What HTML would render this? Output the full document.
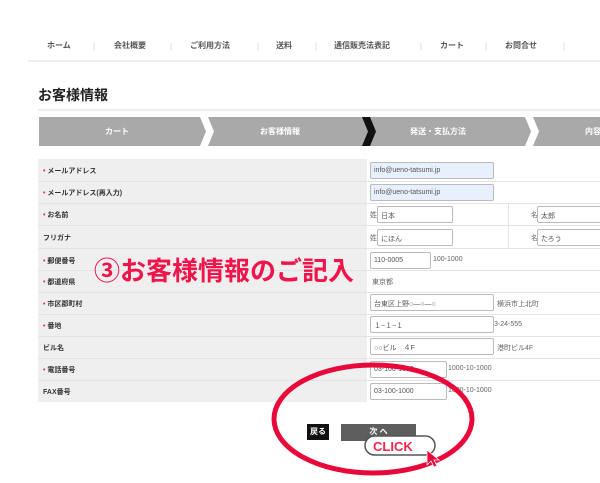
<!DOCTYPE html>
<html><head><meta charset="utf-8"><style>
*{margin:0;padding:0;box-sizing:border-box}
body{width:600px;height:483px;background:#fff;position:relative;overflow:hidden;font-family:"Liberation Sans","Noto Sans CJK JP",sans-serif;color:#333}
.a{position:absolute;white-space:nowrap}
.nav{font-size:8px;font-weight:bold;color:#555;top:40px}
.lbl{font-size:7px;font-weight:bold;color:#333;left:43px}
.lbl b{color:#e8334a}
.in{position:absolute;height:17px;border:1px solid #bbb;background:#fff;font-size:7px;color:#555;padding:4px 3px;border-radius:2px}
.t{font-size:7px;color:#666}
.row{position:absolute;left:38px;width:562px;height:1px;background:#e4e4e4}
</style></head><body>
<div class="a nav" style="left:47px">ホーム</div>
<div class="a nav" style="left:114px">会社概要</div>
<div class="a nav" style="left:190px">ご利用方法</div>
<div class="a nav" style="left:276px">送料</div>
<div class="a nav" style="left:334px">通信販売法表記</div>
<div class="a nav" style="left:440px">カート</div>
<div class="a nav" style="left:505px">お問合せ</div>
<div class="a" style="left:93px;top:42px;color:#ccc;font-size:8px">|</div>
<div class="a" style="left:170px;top:42px;color:#ccc;font-size:8px">|</div>
<div class="a" style="left:257px;top:42px;color:#ccc;font-size:8px">|</div>
<div class="a" style="left:315px;top:42px;color:#ccc;font-size:8px">|</div>
<div class="a" style="left:420px;top:42px;color:#ccc;font-size:8px">|</div>
<div class="a" style="left:485px;top:42px;color:#ccc;font-size:8px">|</div>
<div class="a" style="left:563px;top:42px;color:#ccc;font-size:8px">|</div>
<div class="a" style="left:28px;top:60px;width:572px;height:2px;background:#eee"></div>
<div class="a" style="left:38px;top:85px;font-size:14px;font-weight:bold;color:#222">お客様情報</div>
<div class="a" style="left:38px;top:109px;width:562px;height:2px;background:#eee"></div>
<div class="a" style="left:39px;top:117px;width:561px;height:29px;background:#a9a9a9"></div>
<svg class="a" style="left:0;top:117px" width="600" height="29">
<polygon points="200,0 208,0 214,14.5 208,29 200,29 206,14.5" fill="#fff"/>
<polygon points="362,0 370,0 376,14.5 370,29 362,29 368,14.5" fill="#111"/>
<polygon points="525,0 533,0 539,14.5 533,29 525,29 531,14.5" fill="#fff"/>
</svg>
<div class="a" style="left:105px;top:126px;font-size:8px;font-weight:bold;color:#fff">カート</div>
<div class="a" style="left:260px;top:126px;font-size:8px;font-weight:bold;color:#fff">お客様情報</div>
<div class="a" style="left:410px;top:126px;font-size:8px;font-weight:bold;color:#fff">発送・支払方法</div>
<div class="a" style="left:585px;top:126px;font-size:8px;font-weight:bold;color:#fff">内容</div>
<div class="a" style="left:38px;top:159px;width:329px;height:243px;background:#efefef"></div>
<div class="row" style="top:181px"></div><div class="row" style="top:203px"></div><div class="row" style="top:225px"></div><div class="row" style="top:248px"></div><div class="row" style="top:270px"></div><div class="row" style="top:292px"></div><div class="row" style="top:314px"></div><div class="row" style="top:336px"></div><div class="row" style="top:358px"></div><div class="row" style="top:380px"></div>
<div class="a" style="left:508px;top:203px;width:1px;height:45px;background:#e4e4e4"></div>
<div class="a lbl" style="top:166px"><b>• </b>メールアドレス</div>
<div class="a lbl" style="top:188px"><b>• </b>メールアドレス(再入力)</div>
<div class="a lbl" style="top:210px"><b>• </b>お名前</div>
<div class="a lbl" style="top:233px">フリガナ</div>
<div class="a lbl" style="top:256px"><b>• </b>郵便番号</div>
<div class="a lbl" style="top:277px"><b>• </b>都道府県</div>
<div class="a lbl" style="top:299px"><b>• </b>市区郡町村</div>
<div class="a lbl" style="top:321px"><b>• </b>番地</div>
<div class="a lbl" style="top:343px">ビル名</div>
<div class="a lbl" style="top:365px"><b>• </b>電話番号</div>
<div class="a lbl" style="top:387px">FAX番号</div>
<div class="in" style="left:370px;top:162px;width:124px;background:#e8f0fe">info@ueno-tatsumi.jp</div>
<div class="in" style="left:370px;top:184px;width:124px;background:#e8f0fe">info@ueno-tatsumi.jp</div>
<div class="a t" style="left:370px;top:210px">姓</div><div class="in" style="left:377px;top:206px;width:76px">日本</div>
<div class="a t" style="left:531px;top:210px">名</div><div class="in" style="left:537px;top:206px;width:70px">太郎</div>
<div class="a t" style="left:370px;top:233px">姓</div><div class="in" style="left:377px;top:229px;width:76px">にほん</div>
<div class="a t" style="left:531px;top:233px">名</div><div class="in" style="left:537px;top:229px;width:70px">たろう</div>
<div class="in" style="left:370px;top:252px;width:61px">110-0005</div><div class="a t" style="left:433px;top:256px">100-1000</div>
<div class="a t" style="left:372px;top:277px">東京都</div>
<div class="in" style="left:370px;top:294px;width:124px">台東区上野○―○―○</div><div class="a t" style="left:497px;top:299px">横浜市上北町</div>
<div class="in" style="left:370px;top:316px;width:124px">１−１−１</div><div class="a t" style="left:494px;top:321px">3-24-555</div>
<div class="in" style="left:370px;top:338px;width:124px">○○ビル　４F</div><div class="a t" style="left:497px;top:343px">港町ビル4F</div>
<div class="in" style="left:370px;top:361px;width:77px">03-100-1000</div><div class="a t" style="left:448px;top:365px">1000-10-1000</div>
<div class="in" style="left:370px;top:383px;width:77px">03-100-1000</div><div class="a t" style="left:448px;top:387px">1000-10-1000</div>
<div class="a" style="left:94px;top:251px;font-size:26px;font-weight:bold;color:#f0144b;letter-spacing:0px">③お客様情報のご記入</div>
<div class="a" style="left:307px;top:424px;width:22px;height:16px;background:#111;color:#fff;font-size:8px;font-weight:bold;text-align:center;line-height:16px">戻る</div>
<div class="a" style="left:341px;top:424px;width:75px;height:17px;background:#5e5e5e;color:#fff;font-size:8px;font-weight:bold;text-align:center;line-height:15px">次 へ</div>
<svg class="a" style="left:0;top:0" width="600" height="483">
<ellipse cx="373" cy="419" rx="99" ry="54" fill="none" stroke="#e8093a" stroke-width="5"/>
<rect x="365" y="436" width="70" height="19" rx="9.5" fill="#fff" stroke="#555" stroke-width="1.5"/>
<text x="373" y="451" font-family="Liberation Sans" font-weight="bold" font-size="13" fill="#f0284b">CLICK</text>
<polygon points="427,450 427,465 431,461 434,467 437,466 434,460 439,460" fill="#e8093a" stroke="#fff" stroke-width="0.8"/>
</svg>
</body></html>
